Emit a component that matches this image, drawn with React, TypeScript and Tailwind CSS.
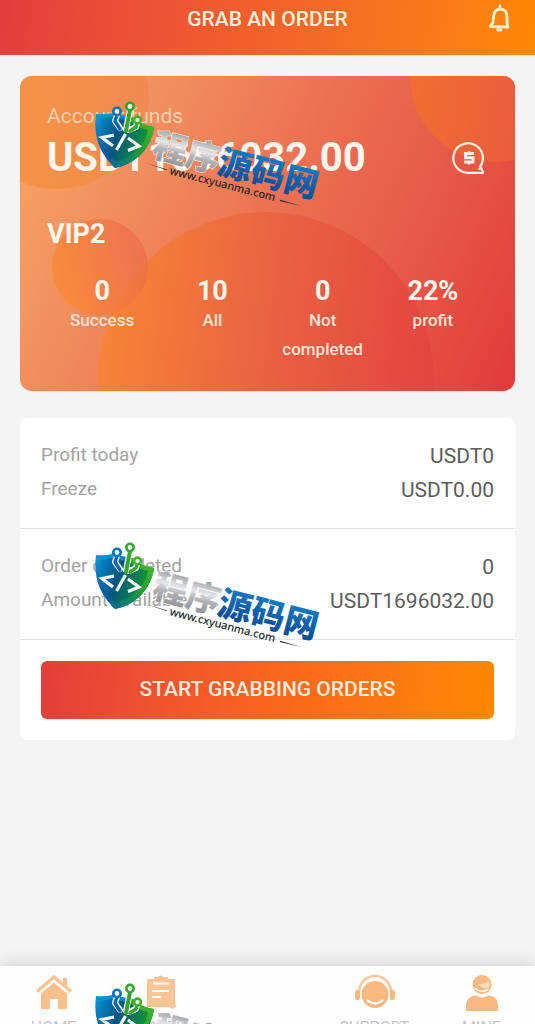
import { useId } from "react";

const stats = [
  { value: "0", label: "Success" },
  { value: "10", label: "All" },
  { value: "0", label: "Not completed" },
  { value: "22%", label: "profit" },
];

const profitRows = [
  { label: "Profit today", value: "USDT0" },
  { label: "Freeze", value: "USDT0.00" },
];

const orderRows = [
  { label: "Order completed", value: "0" },
  { label: "Amount available", value: "USDT1696032.00" },
];

function BellIcon() {
  return (
    <svg viewBox="0 0 24 28" className="h-7 w-6" fill="none" stroke="#ffefd0" strokeWidth="2.8" strokeLinejoin="round" strokeLinecap="round">
      <path d="M13 2v3" />
      <path d="M3 22.5l18 .5-1-4v-6.500c0-4.500-2.500-7.500-6.500-7.500S7 8 6.500 12.500L6 18.500z" />
      <path d="M10.500 26h3.500" />
    </svg>
  );
}

function RecordIcon() {
  return (
    <svg viewBox="0 0 34 34" className="h-[34px] w-[34px]" fill="none" stroke="#fff0e4" strokeWidth="2.2">
      <path d="M27.5 26.5A14.8 14.8 0 1 0 17 31.8h14l-1.5-4.5-3 1" strokeLinejoin="round" />
      <path d="M22 12.5h-8.5v4.2H21V21h-9" strokeWidth="3" />
      <path d="M17 10v2.500M17 21v2.500" strokeWidth="2.500" />
    </svg>
  );
}

function CardShapes() {
  const id = useId();
  return (
    <svg viewBox="0 0 495 315" preserveAspectRatio="none" className="absolute inset-0 h-full w-full" aria-hidden="true">
      <defs>
        <linearGradient id={`${id}a`} x1="0" y1="0.6" x2="1" y2="0.4">
          <stop offset="0" stopColor="#f8923a" />
          <stop offset="1" stopColor="#f08850" />
        </linearGradient>
        <linearGradient id={`${id}b`} x1="0" y1="0.5" x2="1" y2="0.6">
          <stop offset="0" stopColor="#f3702c" />
          <stop offset="1" stopColor="#e95740" />
        </linearGradient>
        <linearGradient id={`${id}c`} x1="0" y1="0.7" x2="1" y2="0.3">
          <stop offset="0" stopColor="#fb8a2c" />
          <stop offset="1" stopColor="#ea6a4e" />
        </linearGradient>
        <linearGradient id={`${id}d`} x1="0" y1="0.5" x2="1" y2="0.6">
          <stop offset="0" stopColor="#f78432" />
          <stop offset="0.5" stopColor="#ea6040" />
          <stop offset="1" stopColor="#e2433f" />
        </linearGradient>
      </defs>
      <circle cx="37" cy="21" r="92" fill={`url(#${id}a)`} opacity="0.85" />
      <circle cx="475" cy="1" r="85" fill={`url(#${id}b)`} opacity="0.8" />
      <circle cx="246" cy="304" r="168" fill={`url(#${id}d)`} opacity="0.9" />
      <circle cx="80" cy="191" r="48" fill={`url(#${id}c)`} opacity="0.7" />
    </svg>
  );
}

function Stamp() {
  const id = useId();
  return (
    <svg viewBox="0 0 230 110" className="h-[110px] w-[230px] shrink-0" role="img" aria-label="程序源码网">
      <defs>
        <linearGradient id={`${id}l`} x1="0" y1="0" x2="0.4" y2="1">
          <stop offset="0" stopColor="#0a9be0" />
          <stop offset="0.6" stopColor="#0560a6" />
          <stop offset="1" stopColor="#0a4f96" />
        </linearGradient>
        <linearGradient id={`${id}r`} x1="1" y1="0" x2="0.2" y2="1">
          <stop offset="0" stopColor="#4cc01c" />
          <stop offset="0.6" stopColor="#1a9a3a" />
          <stop offset="1" stopColor="#07708e" />
        </linearGradient>
        <linearGradient id={`${id}i`} x1="0" y1="0" x2="1" y2="0.3">
          <stop offset="0" stopColor="#0787cf" />
          <stop offset="0.45" stopColor="#05557e" />
          <stop offset="1" stopColor="#12903a" />
        </linearGradient>
        <linearGradient id={`${id}s`} x1="0" y1="0" x2="0" y2="1">
          <stop offset="0.1" stopColor="#85878b" />
          <stop offset="0.45" stopColor="#e4e5e7" />
          <stop offset="0.6" stopColor="#b0b2b5" />
          <stop offset="1" stopColor="#85878b" />
        </linearGradient>
        <linearGradient id={`${id}t`} x1="0" y1="0" x2="0" y2="1">
          <stop offset="0.1" stopColor="#1682cc" />
          <stop offset="1" stopColor="#08428a" />
        </linearGradient>
      </defs>
      <path d="M2 13q9 1 16-1l20 4q8 8 22 10c-3 21-18 37-39 41C6 53-1 36 2 13z" fill={`url(#${id}l)`} />
      <path d="M33 15l6 1q8 8 21 10c-3 21-18 37-39 41q-4-3-5-6z" fill={`url(#${id}r)`} />
      <path d="M6 18l12-2 18 4q7 7 18 9c-3 16-15 27-32 32C9 51 4 36 6 18z" fill={`url(#${id}i)`} />
      <g fill="none" stroke="#fff" strokeWidth="6" strokeLinecap="round" strokeLinejoin="round">
        <path d="M23 14l-2 6 5 7M36 9l-4 19M43 22l-1 4-7 3" />
      </g>
      <g fill="none" strokeWidth="3.4" strokeLinecap="round" strokeLinejoin="round">
        <path d="M23 14l-2 6 5 8" stroke="#0966b0" />
        <path d="M36 9l-4 21" stroke="#35a52d" strokeWidth="4" />
        <path d="M43 22l-1 4-6 4" stroke="#35a52d" />
      </g>
      <g fill="#fff" strokeWidth="2.6">
        <circle cx="23" cy="10.5" r="3.7" stroke="#0b70bd" />
        <circle cx="36" cy="5.5" r="3.7" stroke="#35a52d" />
        <circle cx="43.5" cy="19" r="3.4" stroke="#42ae2b" />
      </g>
      <path d="M20 34L8 36.5l11 8.500M31.500 33l-9 16M34 37l11 8-11 4.500" fill="none" stroke="#fff" strokeWidth="3.2" />
      <g transform="translate(57 55) rotate(14.5)" fontFamily="'Noto Sans CJK SC', sans-serif" fontWeight="900" fontSize="34">
        <text x="0" y="0" fill={`url(#${id}s)`} stroke="#f4f4f4" strokeWidth="1" paintOrder="stroke">
          程序
        </text>
        <text x="67" y="0" fill={`url(#${id}t)`}>
          源码网
        </text>
      </g>
      <g transform="translate(75 73) rotate(14.5)" fill="#22262c">
        <path d="M-25-5l22 1v1zM114-3l23 1-23 .5z" />
        <text x="0" y="0" fontFamily="'Noto Sans', sans-serif" fontWeight="500" fontSize="11">
          www.cxyuanma.com
        </text>
      </g>
    </svg>
  );
}

function HomeIcon() {
  return (
    <svg viewBox="0 0 38 36" className="h-9 w-[38px]" fill="#fbbf8c">
      <path d="M2 17.5L19 3l17 14.5" fill="none" stroke="#fbc495" strokeWidth="3.5" />
      <path d="M28 4h4v8l-4-3z" />
      <path d="M6 19.5l13-11 13 11V35h-9V25h-8v10H6z" />
    </svg>
  );
}

function OrderIcon() {
  return (
    <svg viewBox="0 0 32 36" className="h-9 w-8" fill="#fbc596">
      <path d="M2 5h28v21l1 7-4 2-3-2H2z" />
      <path d="M9 3h4q3-3 6 0h4v4H9z" />
      <path d="M8 9.5h16M7 17h17M7 23h9" stroke="#fff" strokeWidth="2.2" />
    </svg>
  );
}

function SupportIcon() {
  return (
    <svg viewBox="0 0 40 36" className="h-9 w-10" fill="#fbb980">
      <path d="M4 18a16 16 0 0 1 32 0" fill="none" stroke="#f8c79b" strokeWidth="2.5" />
      <rect x="0" y="16" width="5" height="10" rx="2" />
      <rect x="35" y="16" width="5" height="10" rx="2" />
      <circle cx="20" cy="20.5" r="13.5" />
      <path d="M12 26q8 7 16 0" fill="none" stroke="#fff" strokeWidth="2.2" />
    </svg>
  );
}

function UserIcon() {
  return (
    <svg viewBox="0 0 34 38" className="h-[38px] w-[34px]" fill="#fbb980">
      <circle cx="17" cy="10.5" r="9.5" />
      <path d="M24 7q-2 3-11 3.500Q19 15 24 14" fill="#fde0c6" />
      <path d="M10 14.5q6 5 13 1" fill="none" stroke="#fff" strokeWidth="1.5" />
      <path d="M1 37v-5c0-7 5-10.500 10-10.500q6 4 12 0c6 0 10 3.500 10 10.500v5z" />
    </svg>
  );
}

const tabs = [
  { label: "HOME", icon: <HomeIcon /> },
  { label: "ORDER", icon: <OrderIcon /> },
  null,
  { label: "SUPPORT", icon: <SupportIcon /> },
  { label: "MINE", icon: <UserIcon /> },
];

function Rows({ rows }: { rows: { label: string; value: string }[] }) {
  return (
    <dl className="border-b border-[#e2e2e4] px-[21px] pt-5 pb-[22px]">
      {rows.map((row) => (
        <div key={row.label} className="flex h-[34px] items-center justify-between">
          <dt className="text-[19px] text-[#a3a3a3]">{row.label}</dt>
          <dd className="pt-1 text-[21px] text-[#5c5c5c]">{row.value}</dd>
        </div>
      ))}
    </dl>
  );
}

export default function App() {
  return (
    <div className="relative flex h-dvh flex-col overflow-hidden bg-[#f4f4f5] font-['Roboto',sans-serif]">
      <header className="relative flex h-[55px] shrink-0 items-center justify-center bg-linear-100 from-[#e43d3d] via-[#f2622a] to-[#ff8800] pb-4">
        <h1 className="text-[21px] font-medium text-[#fff0dc]">GRAB AN ORDER</h1>
        <button type="button" aria-label="Notifications" className="absolute top-1 right-6">
          <BellIcon />
        </button>
      </header>

      <main className="flex-1 px-5 pt-[21px]">
        <section className="relative overflow-hidden rounded-xl bg-linear-115 from-[#f6a966] via-[#eb7053] to-[#e13a3a] px-[27px] pt-6 pb-[27px] text-[#fff6ee]">
          <CardShapes />
          <div className="relative">
            <p className="text-[21px] leading-8 text-[#fbd0b0]">Account funds</p>
            <div className="flex items-center justify-between">
              <p className="text-[40px] leading-[52px] font-bold">USDT1696032.00</p>
              <button type="button" aria-label="Records" className="mr-0.5">
                <RecordIcon />
              </button>
            </div>
            <p className="mt-6 text-[27px] leading-[52px] font-bold">VIP2</p>
            <ul className="grid grid-cols-4 pt-4 text-center">
              {stats.map((stat) => (
                <li key={stat.label}>
                  <p className="text-[27px] leading-[30px] font-bold">{stat.value}</p>
                  <p className="text-[17px] leading-[29px] font-medium text-[#ffe5d5]">{stat.label}</p>
                </li>
              ))}
            </ul>
          </div>
        </section>

        <section className="mt-[27px] rounded-lg bg-white">
          <Rows rows={profitRows} />
          <Rows rows={orderRows} />
          <div className="px-[21px] py-[21px]">
            <button
              type="button"
              className="h-[58px] w-full rounded-md bg-linear-95 from-[#e43d3a] via-[#f9651c] to-[#ff8800] text-[21px] font-medium text-[#ffeadb]"
            >
              START GRABBING ORDERS
            </button>
          </div>
        </section>
      </main>

      <nav className="grid h-[58px] shrink-0 grid-cols-5 overflow-hidden bg-[#fefefe] shadow-[0_-4px_14px_rgba(0,0,0,0.12)]">
        {tabs.map((tab, i) =>
          tab ? (
            <a key={tab.label} href="#" className="flex flex-col items-center pt-2 text-[16px] text-[#c4c4c4]">
              <span className="flex h-[44px] items-start">{tab.icon}</span>
              <span className="leading-5">{tab.label}</span>
            </a>
          ) : (
            <span key={i} />
          )
        )}
      </nav>

      <div className="pointer-events-none absolute inset-0 flex flex-col gap-[331px] overflow-hidden pt-[101px] pl-[94px]">
        <Stamp />
        <Stamp />
        <Stamp />
      </div>
    </div>
  );
}
